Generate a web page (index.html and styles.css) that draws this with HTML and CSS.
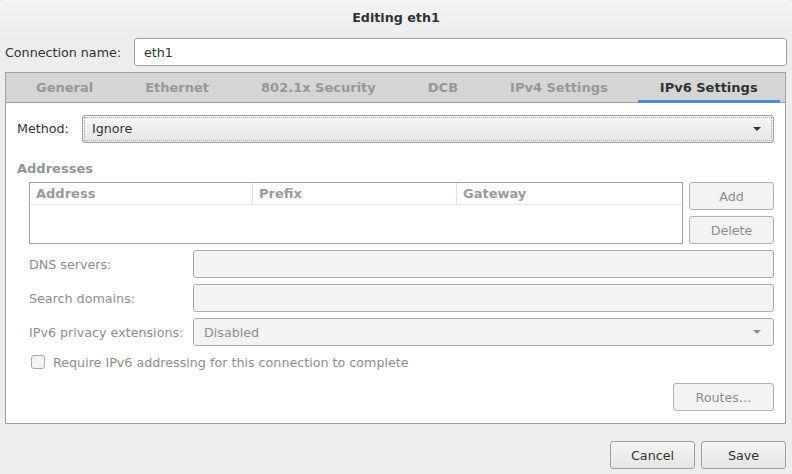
FILE: index.html
```html
<!DOCTYPE html>
<html>
<head>
<meta charset="utf-8">
<title>Editing eth1</title>
<link rel="stylesheet" href="styles.css">
</head>
<body>
<div class="dialog">
  <header class="titlebar"><span class="title">Editing eth1</span></header>

  <div class="name-row">
    <label class="name-label">Connection name:</label>
    <div class="entry">eth1</div>
  </div>

  <div class="notebook">
    <div class="tabs">
      <div class="tab">General</div>
      <div class="tab">Ethernet</div>
      <div class="tab">802.1x Security</div>
      <div class="tab">DCB</div>
      <div class="tab">IPv4 Settings</div>
      <div class="tab active">IPv6 Settings</div>
    </div>

    <div class="page">
      <div class="method-row">
        <span class="method-label">Method:</span>
        <div class="combo">
          <div class="combo-inner">
            <span>Ignore</span>
            <i class="arrow"></i>
          </div>
        </div>
      </div>

      <div class="section-title">Addresses</div>

      <div class="addr-row">
        <div class="table">
          <div class="thead">
            <div class="th col1">Address</div>
            <div class="th col2">Prefix</div>
            <div class="th col3">Gateway</div>
          </div>
          <div class="tbody"></div>
        </div>
        <div class="side-btns">
          <div class="btn disabled">Add</div>
          <div class="btn disabled">Delete</div>
        </div>
      </div>

      <div class="form-grid">
        <span class="dim-label">DNS servers:</span>
        <div class="entry disabled"></div>
        <span class="dim-label">Search domains:</span>
        <div class="entry disabled"></div>
        <span class="dim-label">IPv6 privacy extensions:</span>
        <div class="combo disabled">
          <div class="combo-plain">
            <span>Disabled</span>
            <i class="arrow dim"></i>
          </div>
        </div>
      </div>

      <div class="check-row">
        <span class="checkbox"></span>
        <span class="dim-label">Require IPv6 addressing for this connection to complete</span>
      </div>

      <div class="routes-row">
        <div class="btn disabled routes">Routes…</div>
      </div>
    </div>
  </div>

  <div class="actions">
    <div class="btn">Cancel</div>
    <div class="btn">Save</div>
  </div>
</div>
</body>
</html>
```

FILE: styles.css
```css
* { box-sizing: border-box; }

html, body {
  margin: 0;
  padding: 0;
}

body {
  background: #ededed;
  font-family: "DejaVu Sans", "Noto Sans", sans-serif;
  font-size: 12.7px;
  color: #2e3436;
}

.dialog {
  width: 792px;
  height: 474px;
  display: flex;
  flex-direction: column;
  background: #ededed;
  border-radius: 6px 6px 0 0;
  overflow: hidden;
}

.titlebar {
  height: 38px;
  flex: 0 0 38px;
  display: flex;
  align-items: center;
  justify-content: center;
  background: linear-gradient(#f3f3f3, #ededed);
  padding-bottom: 4px;
}

.title {
  font-weight: bold;
  color: #2e3436;
}

.name-row {
  display: flex;
  align-items: center;
  padding: 0 5px 0 5px;
  height: 28px;
}

.name-label {
  flex: 0 0 129px;
}

.entry {
  flex: 1;
  height: 28px;
  border: 1px solid #a1a1a1;
  border-radius: 3px;
  background: #ffffff;
  padding: 0 9px;
  display: flex;
  align-items: center;
}

.entry.disabled {
  background: #f3f3f3;
  border-color: #ababab;
}

.notebook {
  margin: 6px 6px 0 5px;
  border: 1px solid #a1a1a1;
  background: #ffffff;
  display: flex;
  flex-direction: column;
}

.tabs {
  display: flex;
  height: 30px;
  padding: 0 4px;
  background: #d5d5d5;
  box-shadow: inset 0 -1px 0 #a1a1a1;
}

.tab {
  flex: 1 1 auto;
  margin: 0 4px;
  padding: 1px 22px 0 22px;
  display: flex;
  align-items: center;
  justify-content: center;
  font-weight: bold;
  font-size: 13px;
  color: #969898;
  border-bottom: 3px solid transparent;
  white-space: nowrap;
}

.tab.active {
  color: #2e3436;
  border-bottom-color: #4a90d9;
}

.page {
  padding: 12px 11px 12px 11px;
  display: flex;
  flex-direction: column;
}

.method-row {
  display: flex;
  align-items: center;
  height: 28px;
  line-height: 26px;
}

.method-label {
  flex: 0 0 65px;
}

.combo {
  flex: 1;
  height: 28px;
  border: 1px solid #a1a1a1;
  border-radius: 3px;
  padding: 1px;
  background: linear-gradient(#f6f6f6, #e6e6e6);
}

.combo-inner {
  height: 100%;
  border: 1px dotted #a8a8a8;
  display: flex;
  align-items: center;
  justify-content: space-between;
  padding: 0 10px 0 7px;
}

.combo.disabled {
  background: #f3f3f3;
  border-color: #ababab;
  color: #8b8e8f;
}

.combo-plain {
  height: 100%;
  display: flex;
  align-items: center;
  justify-content: space-between;
  padding: 0 11px 0 9px;
}

.arrow {
  width: 0;
  height: 0;
  border-left: 4px solid transparent;
  border-right: 4px solid transparent;
  border-top: 4px solid #2e3436;
}

.arrow.dim {
  border-top-color: #8b8e8f;
}

.section-title {
  margin-top: 18px;
  margin-bottom: 5px;
  height: 16px;
  line-height: 16px;
  font-weight: bold;
  font-size: 13px;
  color: #929595;
}

.addr-row {
  display: flex;
  gap: 6px;
  margin-left: 12px;
}

.table {
  flex: 1;
  height: 62px;
  border: 1px solid #a1a1a1;
  background: #ffffff;
  display: flex;
  flex-direction: column;
}

.thead {
  display: flex;
  height: 22px;
  border-bottom: 1px solid #e6e6e6;
}

.th {
  font-weight: bold;
  font-size: 13px;
  color: #999b9b;
  padding: 0 6px;
  display: flex;
  align-items: center;
}

.col1 { flex: 0 0 222px; }
.col2 { flex: 0 0 204px; border-left: 1px solid #e3e3e3; }
.col3 { flex: 1; border-left: 1px solid #e3e3e3; }

.side-btns {
  flex: 0 0 85px;
  display: flex;
  flex-direction: column;
  gap: 6px;
}

.btn {
  height: 28px;
  border: 1px solid #a1a1a1;
  border-radius: 3px;
  background: linear-gradient(#f6f6f6, #e4e4e4);
  display: flex;
  align-items: center;
  justify-content: center;
  color: #2e3436;
}

.btn.disabled {
  background: #f3f3f3;
  border-color: #b1b1b1;
  color: #8b8e8f;
}

.form-grid {
  margin: 6px 0 0 12px;
  display: grid;
  grid-template-columns: 164px 1fr;
  grid-auto-rows: 28px;
  row-gap: 6px;
  align-items: center;
}

.dim-label {
  color: #8b8e8f;
}

.check-row {
  margin: 8px 0 0 14px;
  height: 16px;
  display: flex;
  align-items: center;
  gap: 8px;
}

.checkbox {
  width: 14px;
  height: 14px;
  border: 1px solid #ababab;
  border-radius: 3px;
  background: #f3f3f3;
}

.routes-row {
  margin-top: 13px;
  display: flex;
  justify-content: flex-end;
}

.routes {
  width: 101px;
}

.actions {
  display: flex;
  justify-content: flex-end;
  gap: 6px;
  padding: 17px 6px 0 0;
}

.actions .btn {
  width: 85px;
}
```
